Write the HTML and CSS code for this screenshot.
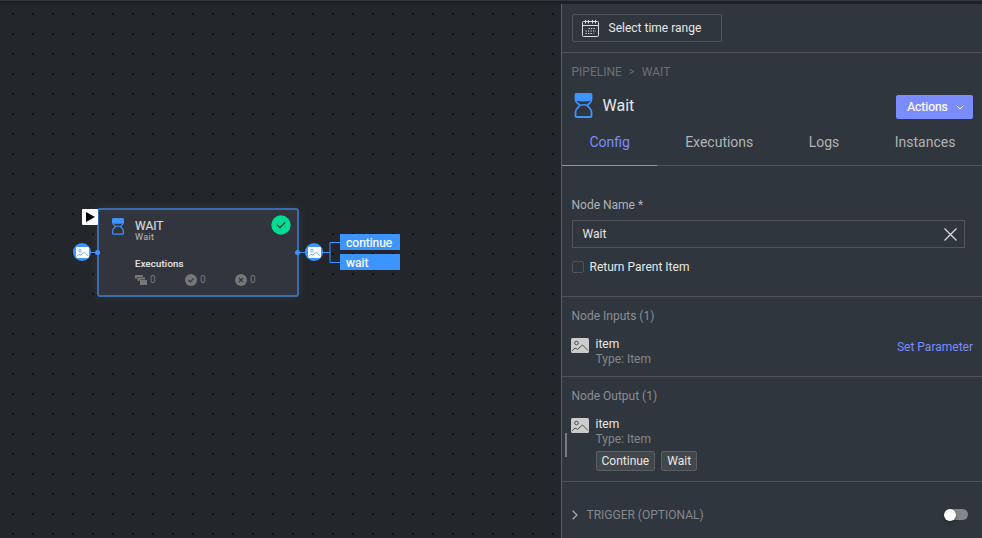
FILE: index.html
```html
<!DOCTYPE html>
<html lang="en">
<head>
<meta charset="utf-8">
<title>Pipeline - Wait</title>
<link rel="stylesheet" href="styles.css">
</head>
<body>
<svg class="defs" width="0" height="0">
  <symbol id="glass" viewBox="0 0 18 25">
    <path d="M2 1h14q1 0 1 1v4.500c0 4-4 4.300-4 6s4 2.500 4 6.500V23q0 1-1 1H2q-1 0-1-1v-4c0-4 4-4.800 4-6.500S1 10.500 1 6.500V2q0-1 1-1Z" fill="none" stroke="currentColor" stroke-width="1.800"/>
    <path d="M5 12.500q4-1.500 8 0" fill="none" stroke="currentColor" stroke-width="1.500"/>
    <path d="M2 .3h14q1.500 0 1.500 1.500V7.500q-8.500 2-17 0V1.800Q.5.3 2 .3Z" fill="currentColor"/>
  </symbol>
  <symbol id="image" viewBox="0 0 18 15">
    <rect width="18" height="15" rx="1.500" fill="var(--face)"/>
    <circle cx="5.500" cy="5" r="1.800" fill="none" stroke="var(--ink)"/>
    <path d="M1 13l3-3 2.500 1.300L11.500 7l5.500 5.500" fill="none" stroke="var(--ink)"/>
  </symbol>
</svg>
<div class="topbar"></div>
<div class="app">
  <main class="canvas">
    <svg class="wires" width="420" height="120" viewBox="0 0 420 120" fill="none" stroke="#3d94ff">
      <path d="M90 57.500h8M298 57.500h32M340 47.500h-10v20h10"/>
    </svg>
    <section class="node">
      <svg class="node-glass"><use href="#glass"/></svg>
      <div class="node-body">
        <div class="node-title">WAIT</div>
        <div class="node-type">Wait</div>
        <div class="node-exec">Executions</div>
        <div class="counts">
          <span class="count"><svg width="12" height="12" viewBox="0 0 12 12" fill="#777"><path d="M0 1h8v2H2v1.500H0ZM2.500 3.500h7.500v2H4.500V7H2.500ZM5 6H12V11H5Z"/></svg>0</span>
          <span class="count"><svg width="12" height="12" viewBox="0 0 12 12"><circle cx="6" cy="6" r="6" fill="#777"/><path d="M3.500 6l1.800 1.800 3.200-3.300" fill="none" stroke="#33353e" stroke-width="1.200"/></svg>0</span>
          <span class="count"><svg width="12" height="12" viewBox="0 0 12 12"><circle cx="6" cy="6" r="6" fill="#777"/><path d="M4 4l4 4M8 4L4 8" stroke="#33353e" stroke-width="1.200"/></svg>0</span>
        </div>
      </div>
      <svg class="node-ok" width="20" height="20" viewBox="0 0 20 20"><circle cx="10" cy="10" r="9.700" fill="#00dc91"/><path d="M6 9.700l3 3 5-5.200" fill="none" stroke="#30363d" stroke-width="1.200"/></svg>
    </section>
    <div class="play"><svg width="16" height="16" viewBox="0 0 16 16"><path d="M4 3l9 5-9 5Z"/></svg></div>
    <i class="anchor"></i>
    <i class="anchor right"></i>
    <div class="port in"><svg><use href="#image"/></svg></div>
    <div class="port out"><svg><use href="#image"/></svg></div>
    <div class="label first">continue</div>
    <div class="label second">wait</div>
  </main>
  <aside class="panel">
    <div class="time">
      <button class="range">
        <svg width="17" height="17" viewBox="0 0 17 17" fill="none" stroke="#ddd"><rect x=".5" y="1.500" width="16" height="15" rx="1"/><path d="M.5 5.500h16M3.500 0v3.500M6.500 0v3.500M10.500 0v3.500M13.500 0v3.500"/><path d="M6.500 8.500h7.500M3.500 11h10.500M3.500 13.500h8" stroke-width="1.200" stroke-dasharray="1.300 1.200"/></svg>
        Select time range
      </button>
    </div>
    <div class="crumbs"><span>PIPELINE</span><span class="gt">&gt;</span><span>WAIT</span></div>
    <div class="head">
      <svg class="head-glass"><use href="#glass"/></svg>
      <h1>Wait</h1>
      <button class="actions">Actions<svg width="8" height="5" viewBox="0 0 8 5" fill="none" stroke="#fff"><path d="M.5.5L4 4 7.500.5"/></svg></button>
    </div>
    <nav class="tabs"><a class="on">Config</a><a>Executions</a><a>Logs</a><a>Instances</a></nav>
    <div class="form">
      <label>Node Name *</label>
      <div class="field">Wait<svg width="13" height="13" viewBox="0 0 13 13" stroke="#ddd" stroke-width="1.200"><path d="M.5.5l12 12M12.500.5l-12 12"/></svg></div>
      <div class="check"><i></i>Return Parent Item</div>
    </div>
    <div class="io">
      <h2>Node Inputs (1)</h2>
      <div class="item"><svg><use href="#image"/></svg><div><b>item</b><small>Type: Item</small></div><a>Set Parameter</a></div>
    </div>
    <div class="io outputs">
      <h2>Node Output (1)</h2>
      <div class="item"><svg><use href="#image"/></svg><div><b>item</b><small>Type: Item</small><div class="chips"><span>Continue</span><span>Wait</span></div></div></div>
    </div>
    <div class="trigger"><svg width="6" height="10" viewBox="0 0 6 10" fill="none" stroke="#aaa" stroke-width="1.300"><path d="M.7.7L5 5 .7 9.300"/></svg>TRIGGER (OPTIONAL)<span class="toggle"></span></div>
    <i class="grip"></i>
  </aside>
</div>
</body>
</html>
```
FILE: styles.css
```css
* { box-sizing: border-box; }
body { margin: 0; width: 982px; height: 538px; overflow: hidden; background: #23272b; font: 12px/14px Roboto, sans-serif; color: #e8e8e8; display: flex; flex-direction: column; }
button { font: inherit; color: inherit; background: none; border: 0; padding: 0; margin: 0; }
.defs { position: absolute; }
.topbar { height: 1px; background: #30363d; flex: none; }
.app { flex: 1; display: flex; min-height: 0; }
.canvas { flex: 1; position: relative; background-color: #23272b; background-image: linear-gradient(#181b1f, rgba(24,27,31,0) 4px), conic-gradient(from 0deg at 2px 2px, transparent 75%, #0f1114 0); background-size: 100% 100%, 20px 20px; background-position: 0 0, 12px 12px; background-repeat: no-repeat, repeat; }
.wires { position: absolute; left: 0; top: 194px; }
.node { position: absolute; left: 97px; top: 207px; width: 202px; height: 89px; border: 2px solid #3a6bad; border-radius: 3px; background: #33353e; box-shadow: 0 0 10px rgba(80,80,90,.35); padding: 8px 0 0 13px; display: flex; }
.node-glass { width: 12px; height: 17px; color: #3d94ff; flex: none; margin-right: 11px; }
.node-body { padding-top: 2px; }
.node-title { line-height: 13px; color: #d8d8d8; -webkit-text-stroke: .2px; }
.node-type { font-size: 9px; line-height: 9px; color: #bbb; letter-spacing: .4px; }
.node-exec { font-size: 9.500px; line-height: 12px; margin-top: 16px; color: #eee; letter-spacing: .25px; -webkit-text-stroke: .2px; }
.counts { display: flex; margin-top: 4px; }
.count { width: 50px; display: flex; gap: 3px; align-items: center; font-size: 10px; line-height: 12px; color: #777; }
.node-ok { position: absolute; right: 6px; top: 5px; }
.play { position: absolute; left: 82px; top: 208px; width: 16px; height: 16px; background: #fff; border-radius: 1px; }
.play svg { display: block; }
.anchor { position: absolute; left: 95px; top: 249px; width: 5px; height: 5px; border-radius: 50%; background: #3d94ff; }
.anchor.right { left: 295px; }
.port { position: absolute; top: 242px; width: 18px; height: 18px; border-radius: 50%; background: #3d94ff; display: flex; align-items: center; justify-content: center; --face: #fff; --ink: #3d94ff; }
.port svg { width: 13px; height: 11px; }
.in { left: 73px; }
.out { left: 305px; }
.label { position: absolute; left: 340px; width: 60px; height: 16px; padding-left: 6px; line-height: 18px; background: #3d94ff; color: #fff; -webkit-text-stroke: .2px; }
.first { top: 233px; }
.second { top: 253px; }
.panel { width: 421px; margin-top: 3px; border-left: 1px solid #5b5e63; background: #30363d; box-shadow: 0 -3px #1e2226; position: relative; }
.time { height: 49px; padding: 10px; border-bottom: 1px solid #50535a; }
.range { width: 150px; height: 28px; border: 1px solid #50535a; border-radius: 2px; display: flex; align-items: center; gap: 9.500px; padding-left: 9px; }
.crumbs { padding: 12px 10px 0 9.500px; display: flex; gap: 7px; color: #6c7074; }
.gt { width: 6px; font-size: 11px; }
.head { display: flex; align-items: center; height: 28px; margin-top: 13px; padding: 0 9px 0 12px; }
.head-glass { width: 19px; height: 25px; margin-top: -1px; color: #3d94ff; }
h1 { margin: 0 auto 0 9.500px; font-size: 16px; font-weight: 400; line-height: 20px; }
.actions { width: 77px; height: 24px; margin-top: 2px; background: #7b8cff; color: #fff; border-radius: 2px; display: flex; align-items: center; justify-content: center; gap: 8px; -webkit-text-stroke: .2px; padding-left: 2px; }
.tabs { height: 46px; border-bottom: 1px solid #50535a; display: flex; font-size: 14px; line-height: 44px; color: #b0b2b4; }
.tabs a { padding: 0 27.700px; height: 46px; }
.tabs .on { color: #7b8cff; border-bottom: 1px solid #7b8cff; padding: 0 27.500px; }
.form { height: 131px; padding: 31px 17px 0 10px; border-bottom: 1px solid #50535a; }
.form label { display: block; line-height: 16px; margin-left: -.500px; color: #b0b2b4; }
.field { height: 28px; margin-top: 7px; border: 1px solid #50535a; display: flex; align-items: center; justify-content: space-between; padding: 0 7px 0 9.500px; }
.check { display: flex; align-items: center; gap: 5.500px; margin-top: 12px; }
.check i { width: 12px; height: 12px; border: 1px solid #50535a; border-radius: 2px; }
.io { height: 80px; border-bottom: 1px solid #50535a; padding: 12px 9px 0; }
.io h2 { margin: 0 0 0 .500px; font: inherit; color: #8b8e92; }
.outputs { height: 105px; }
.item { display: flex; margin-top: 14px; }
.item > svg { width: 18px; height: 15px; margin: 1px 6.500px 0 0; flex: none; --face: #ccc; --ink: #50555b; }
.item b, .item small { display: block; font: inherit; line-height: 15px; }
.item small { color: #85888c; }
.item a { margin-left: auto; padding-top: 3px; color: #7b8cff; }
.chips { display: flex; gap: 6px; margin-top: 4px; }
.chips span { height: 20px; padding: 0 5px; line-height: 18px; border: 1px solid #5b5e63; border-radius: 2px; background: #42474c; }
.trigger { display: flex; align-items: center; height: 66px; padding: 0 14px 0 9.500px; gap: 9px; color: #85888c; }
.toggle { margin-left: auto; width: 22px; height: 11px; border-radius: 6px; background: #83868a; position: relative; top: -.5px; }
.toggle::before { content: ""; position: absolute; left: -2px; top: -.5px; width: 12px; height: 12px; border-radius: 50%; background: #fff; box-shadow: 0 1px 3px rgba(0,0,0,.4); }
.grip { position: absolute; left: 3px; top: 429px; width: 2px; height: 24px; background: #737b7e; }
```
